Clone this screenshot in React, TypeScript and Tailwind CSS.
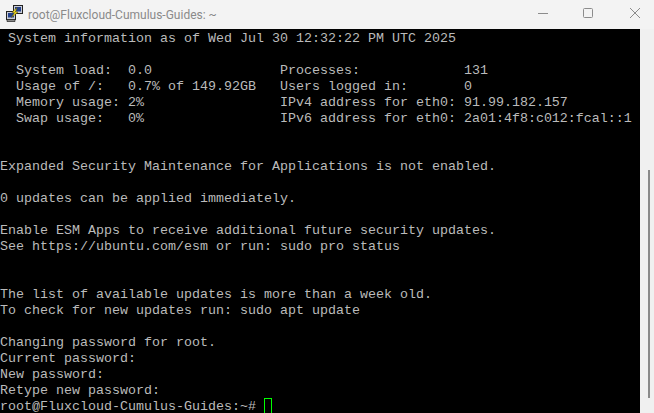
const lines = [
  ' System information as of Wed Jul 30 12:32:22 PM UTC 2025',
  '',
  '  System load:  0.0                Processes:             131',
  '  Usage of /:   0.7% of 149.92GB   Users logged in:       0',
  '  Memory usage: 2%                 IPv4 address for eth0: 91.99.182.157',
  '  Swap usage:   0%                 IPv6 address for eth0: 2a01:4f8:c012:fcal::1',
  '',
  '',
  'Expanded Security Maintenance for Applications is not enabled.',
  '',
  '0 updates can be applied immediately.',
  '',
  'Enable ESM Apps to receive additional future security updates.',
  'See https://ubuntu.com/esm or run: sudo pro status',
  '',
  '',
  'The list of available updates is more than a week old.',
  'To check for new updates run: sudo apt update',
  '',
  'Changing password for root.',
  'Current password:',
  'New password:',
  'Retype new password:',
]

function PuttyIcon() {
  return (
    <svg viewBox="0 0 17 17" className="w-[17px] h-[17px] shrink-0 -mt-[2px]">
      <rect x="7.5" y="0.5" width="9" height="8" fill="#c8ccd8" stroke="#222" />
      <rect x="9" y="2" width="6" height="4.5" fill="#24408a" />
      <rect x="0.5" y="6.5" width="9" height="8" fill="#c8ccd8" stroke="#222" />
      <rect x="2" y="8" width="6" height="4.5" fill="#24408a" />
      <path d="M1 14.5h8v2H1z" fill="#8a8a8a" stroke="#222" strokeWidth="0.7" />
      <path d="M11 2.5 6 7.5h2.5L5.5 12.5l6.5-5.5H9.5z" fill="#f6e020" stroke="#5c4e00" strokeWidth="0.5" />
    </svg>
  )
}

export default function App() {
  return (
    <div className="w-[654px] h-[413px] overflow-hidden flex flex-col bg-[#f0f0f0]">
      {/* Title bar */}
      <div className="h-[29px] shrink-0 flex items-center bg-[#f3f3f3]">
        <div className="ml-[6px] flex items-center gap-[5px]">
          <PuttyIcon />
          <span className="text-[12px] text-[#8a8a8a] font-['Roboto','Liberation_Sans',sans-serif]">
            root@Fluxcloud-Cumulus-Guides: ~
          </span>
        </div>
        <div className="ml-auto pb-[3px] flex items-center text-[#8c8c8c]">
          <svg viewBox="0 0 12 12" className="w-3 h-3 mr-[33px]">
            <path d="M1 6.5h10" stroke="currentColor" strokeWidth="1" />
          </svg>
          <svg viewBox="0 0 12 12" className="w-3 h-3 mr-[35px]">
            <rect x="1.5" y="1.5" width="9" height="9" rx="1" fill="none" stroke="currentColor" strokeWidth="1" />
          </svg>
          <svg viewBox="0 0 12 12" className="w-3 h-3 mr-[13px]">
            <path d="M1 1l10 10M11 1 1 11" stroke="currentColor" strokeWidth="1" />
          </svg>
        </div>
      </div>

      <div className="flex-1 flex min-h-0">
        {/* Terminal */}
        <div className="w-[640px] pt-[2px] bg-black font-['Liberation_Mono',monospace] text-[13.33px] leading-[16px] text-[#bbbbbb] whitespace-pre">
          {lines.map((line, i) => (
            <div key={i} className="h-4">{line}</div>
          ))}
          <div className="h-4 flex">
            <span>root@Fluxcloud-Cumulus-Guides:~# </span>
            <span className="w-2 h-4 -mt-px border border-[#00ff00]" />
          </div>
        </div>

        {/* Scrollbar */}
        <div className="flex-1 pl-2 pt-[141px]">
          <div className="w-[2px] h-[228px] bg-[#8a8a8a]" />
        </div>
      </div>
    </div>
  )
}
